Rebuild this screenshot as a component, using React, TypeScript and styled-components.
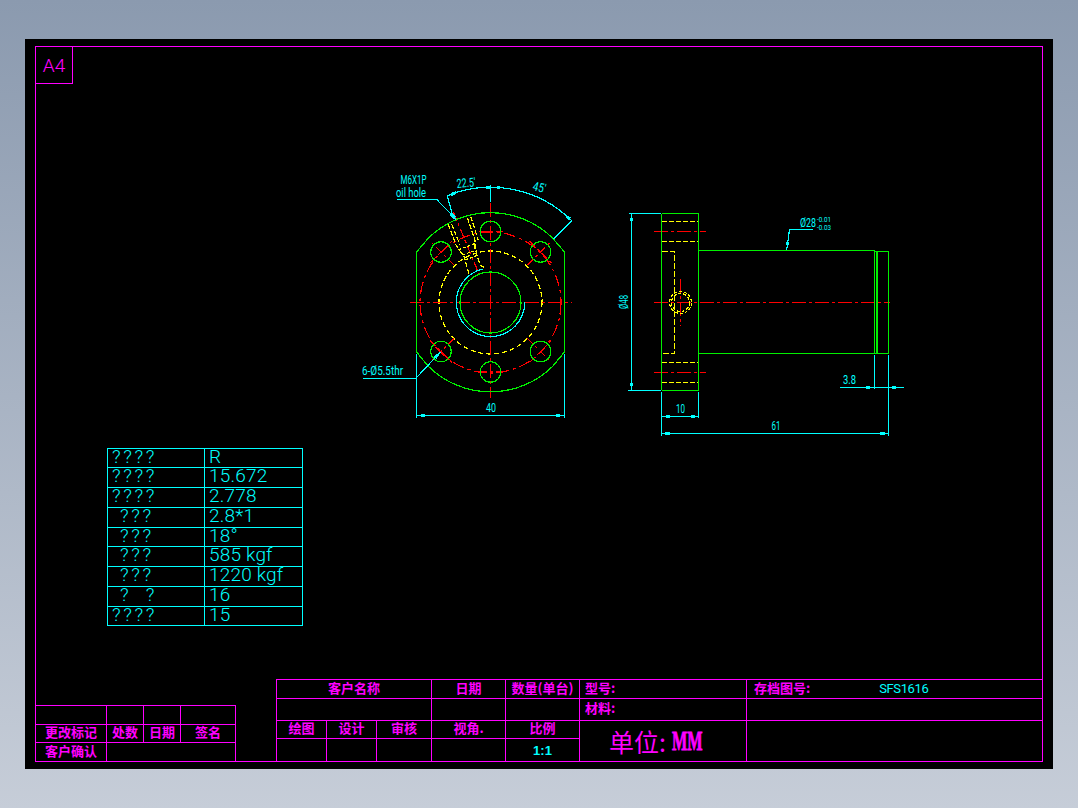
import React from 'react';
import styled, { createGlobalStyle } from 'styled-components';

const GREEN = '#00f000';
const CYAN = '#00ffff';
const RED = '#ff0000';
const YELLOW = '#ffff00';
const MAGENTA = '#ff00ff';
const CX = 490.5;
const CY = 302.5;

const GlobalStyle = createGlobalStyle`
    html, body {
        margin: 0;
        padding: 0;
    }
    #root {
        height: 808px;
    }
`;

const Viewer = styled.div`
    box-sizing: border-box;
    width: 1078px;
    height: 808px;
    padding: 39px 25px;
    overflow: hidden;
    background: linear-gradient(180deg, #8b9aaf 0%, #c6cdd8 100%);
`;

const Sheet = styled.div`
    box-sizing: border-box;
    height: 730px;
    padding: 7px 10px;
    background: #000;
`;

const Frame = styled.div`
    box-sizing: border-box;
    height: 716px;
    display: flex;
    flex-direction: column;
    border: 1px solid ${MAGENTA};
    font-family: 'Noto Sans CJK SC', 'Liberation Sans', sans-serif;
`;

const SizeTag = styled.div`
    box-sizing: border-box;
    width: 37px;
    height: 37px;
    padding-top: 1px;
    display: flex;
    align-items: center;
    justify-content: center;
    border-right: 1px solid ${MAGENTA};
    border-bottom: 1px solid ${MAGENTA};
    color: ${MAGENTA};
    font: 300 19px Roboto, sans-serif;
`;

const Drawing = styled.svg`
    display: block;
    flex: none;
    width: 580px;
    height: 285px;
    margin: 76px 0 0 304px;
    shape-rendering: crispEdges;
`;

const Line = styled.path<{ $color: string; $dash?: string; $width?: number }>`
    fill: none;
    stroke: ${(p) => p.$color};
    stroke-width: ${(p) => p.$width ?? 1.2};
    stroke-dasharray: ${(p) => p.$dash ?? 'none'};
`;

const Round = styled.circle<{ $color: string; $dash?: string }>`
    fill: none;
    stroke: ${(p) => p.$color};
    stroke-width: 1.2;
    stroke-dasharray: ${(p) => p.$dash ?? 'none'};
`;

const DimText = styled.text`
    fill: ${CYAN};
    font-family: Roboto, sans-serif;
    font-weight: 400;
    font-size: 12.5px;
`;

const ToleranceText = styled(DimText)`
    font-size: 7px;
`;

const ParamTable = styled.div`
    flex: none;
    width: 196px;
    margin: 3px 0 0 71px;
    padding: 1px;
    box-sizing: border-box;
    display: grid;
    grid-template-columns: 96px 97px;
    grid-template-rows: 18px 19px 19px 19px 18px 19px 19px 19px 18px;
    gap: 1px;
    background: ${CYAN};
`;

const ParamName = styled.div<{ $indent: number }>`
    background: #000;
    color: ${CYAN};
    padding-left: ${(p) => p.$indent}px;
    font: 300 19px/15px Roboto, sans-serif;
    letter-spacing: 2.6px;
    white-space: pre;
`;

const ParamValue = styled.div`
    background: #000;
    color: ${CYAN};
    padding-left: 4px;
    font: 300 19px/15px Roboto, sans-serif;
    letter-spacing: 0.2px;
    white-space: pre;
`;

const BottomRow = styled.div`
    margin-top: auto;
    display: flex;
    align-items: flex-end;
    justify-content: space-between;
`;

const RevisionTable = styled.div`
    display: grid;
    grid-template-columns: 70px 36px 36px 54px;
    grid-template-rows: 18px 17px 18px;
    gap: 1px;
    padding: 1px 1px 0 0;
    background: ${MAGENTA};
`;

const TitleBlock = styled.div`
    display: grid;
    grid-template-columns: 49px 49px 54px 73px 73px 166px 295px;
    grid-template-rows: 18px 21px 17px 22px;
    gap: 1px;
    padding: 1px 0 0 1px;
    background: ${MAGENTA};
`;

const Cell = styled.div<{ $col?: number; $row?: number; $left?: number }>`
    box-sizing: border-box;
    grid-column: span ${(p) => p.$col ?? 1};
    grid-row: span ${(p) => p.$row ?? 1};
    display: flex;
    align-items: center;
    justify-content: ${(p) => (p.$left !== undefined ? 'flex-start' : 'center')};
    padding-left: ${(p) => p.$left ?? 0}px;
    padding-bottom: 4px;
    background: #000;
    color: ${MAGENTA};
    font-size: 13px;
    font-weight: 700;
    line-height: 1;
    white-space: pre;
`;

const CodeValue = styled.span`
    margin: 3px 0 0 69px;
    color: ${CYAN};
    font: 400 13px Roboto, sans-serif;
    letter-spacing: -0.4px;
`;

const ScaleValue = styled.span`
    margin-top: 4px;
    color: ${CYAN};
    font: bold 13px 'Liberation Sans', sans-serif;
`;

const UnitLabel = styled.span`
    margin-top: 4px;
    font-size: 25px;
    font-weight: 400;
`;

const UnitValue = styled.span`
    display: inline-block;
    width: 28px;
    margin: 4px 0 0 6px;
    font: bold 27px 'Liberation Serif', serif;
    -webkit-text-stroke: 0.8px ${MAGENTA};
    transform: scaleX(0.6);
    transform-origin: left center;
`;

const params = [
    { name: '????', indent: 4, value: 'R' },
    { name: '????', indent: 4, value: '15.672' },
    { name: '????', indent: 4, value: '2.778' },
    { name: '???', indent: 12, value: '2.8*1' },
    { name: '???', indent: 12, value: '18°' },
    { name: '???', indent: 12, value: '585 kgf' },
    { name: '???', indent: 12, value: '1220 kgf' },
    { name: '?  ?', indent: 12, value: '16' },
    { name: '????', indent: 4, value: '15' },
];

const holes = [
    { x: 490.5, y: 231.5, diag: false },
    { x: 441, y: 252, diag: true },
    { x: 540.5, y: 252, diag: true },
    { x: 441, y: 351.5, diag: true },
    { x: 540.5, y: 351.5, diag: true },
    { x: 490.5, y: 372, diag: false },
];

const crossPath = (x: number, y: number, diag: boolean) => {
    if (!diag) return `M${x - 12} ${y}H${x + 12}`;
    const sx = x < CX ? -1 : 1;
    const sy = y < CY ? -1 : 1;
    return `M${x - 13 * sx} ${y - 13 * sy}L${x + 11 * sx} ${y + 11 * sy}M${x - 11} ${y + 11 * sx * sy}L${x + 11} ${y - 11 * sx * sy}`;
};

const RED_DASH = '14 3 3 3';
const YELLOW_DASH = '5 3';

const FrontView = () => (
    <g>
        <Round cx={CX} cy={CY} r={70.5} $color={RED} $dash="12 4 3 4" />
        <Round cx={CX} cy={CY} r={51.5} $color={YELLOW} $dash={YELLOW_DASH} />
        <Line $color={RED} $dash={RED_DASH} d="M410 302.5H572M490.5 203V398" />
        <Line $color={RED} $dash="9 3 3 3" d="M453.4 212.4L479 274" />
        {holes.map((h) => (
            <g key={`${h.x}-${h.y}`}>
                <Line $color={RED} $dash="8 3 3 3" d={crossPath(h.x, h.y, h.diag)} />
                <Round cx={h.x} cy={h.y} r={10.3} $color={GREEN} />
            </g>
        ))}
        <Line
            $color={YELLOW}
            $dash="5 2"
            d="M448.3 224.3L456 245L464 256.7L469.3 275M451.7 224.3L460 245M467.3 217.7L475 240V248.3L480 265L485 268M470.7 216.7L478.3 240"
        />
        <Line $color={YELLOW} $dash="3 2" d="M458 250L476 243M462 255L477 250M465 260L478 255" />
        <Line
            $color={GREEN}
            d="M428.5 238A88.5 88.5 0 0 1 552.5 238L564.5 252V352L552.5 366.5A88.5 88.5 0 0 1 428.5 366.5L416.5 352V252Z"
        />
        <Round cx={CX} cy={CY} r={30.5} $color={GREEN} />
        <Line $color={CYAN} d="M524.7 302.5A34.2 34.2 0 1 1 483 269" />
    </g>
);

const FrontDims = () => (
    <g>
        <Line $color={CYAN} d="M447.3 195.7A115 115 0 0 1 571.7 220.7" />
        <Line $color={CYAN} d="M490.5 185V202M447.3 195.7L453.3 218.3M571.7 220.7L553.3 239" />
        <Line $color={CYAN} $width={3} d="M451 194.5L456 192.7M486 187.7H491M497 187.7H500M567 216.5L570 219" />
        <Line $color={CYAN} d="M396.7 199.5H436.7L456 219.3" />
        <Line $color={CYAN} $width={3} d="M451.5 214.5L455 218" />
        <DimText x={400.5} y={183.5} textLength={26} lengthAdjust="spacingAndGlyphs">M6X1P</DimText>
        <DimText x={396} y={196.5} textLength={30} lengthAdjust="spacingAndGlyphs">oil hole</DimText>
        <DimText x={457} y={188} textLength={19} lengthAdjust="spacingAndGlyphs" transform="rotate(-5 457 188)">22.5'</DimText>
        <DimText x={532} y={190} textLength={13} lengthAdjust="spacingAndGlyphs" transform="rotate(14 532 190)">45'</DimText>
        <Line $color={CYAN} d="M363 378.5H415.7L440.7 351.7" />
        <Line $color={CYAN} $width={3} d="M435 358L438 354.7" />
        <DimText x={362} y={375} textLength={41} lengthAdjust="spacingAndGlyphs">6-Ø5.5thr</DimText>
        <Line $color={CYAN} d="M416.5 354V418M564.5 354V418M416.5 415.5H564.5" />
        <Line $color={CYAN} $width={3} d="M421 415.5H425M556 415.5H560" />
        <DimText x={486} y={412} textLength={10} lengthAdjust="spacingAndGlyphs">40</DimText>
    </g>
);

const SideView = () => (
    <g>
        <Line $color={RED} $dash={RED_DASH} d="M654 231.5H706M654 372.5H706M654 302.5H890M680.5 279V326" />
        <Line $color={YELLOW} $dash="5 2" d="M661.5 221.5H698M661.5 241.5H698M661.5 362.5H698M661.5 382.5H698" />
        <Line $color={YELLOW} $dash="6 2" d="M662 251.5H674.5V353.5H662" />
        <Round cx={680.5} cy={302.5} r={11} $color={YELLOW} $dash="3 2" />
        <Round cx={680.5} cy={302.5} r={9} $color={YELLOW} $dash="3 2" />
        <Line $color={GREEN} d="M662.5 213.5H698.5V390.5H662.5L661.5 389.5V214.5ZM698.5 250.5H874.5V353.5H698.5M874.5 250.5V353.5M874.5 251.5H888.5V353.5H874.5" />
        <Line $color={GREEN} $width={2} d="M877 251.5V353.5" />
    </g>
);

const SideDims = () => (
    <g>
        <Line $color={CYAN} d="M629 213.5H660.5M628 390.5H660.5M631.5 213.5V390.5" />
        <Line $color={CYAN} $width={3} d="M631.5 218V221M631.5 383V386" />
        <DimText x={627.5} y={309} textLength={14} lengthAdjust="spacingAndGlyphs" transform="rotate(-90 627.5 309)">Ø48</DimText>
        <Line $color={CYAN} d="M813.3 229.5H789.5L786.7 250" />
        <Line $color={CYAN} $width={3} d="M787.5 242L787 245" />
        <DimText x={800} y={227} textLength={16} lengthAdjust="spacingAndGlyphs">Ø28</DimText>
        <ToleranceText x={817} y={222} textLength={14} lengthAdjust="spacingAndGlyphs">-0.01</ToleranceText>
        <ToleranceText x={817} y={230} textLength={14} lengthAdjust="spacingAndGlyphs">-0.03</ToleranceText>
        <Line $color={CYAN} d="M661.5 392V436M698.5 392V418M661.5 416.5H698.5" />
        <Line $color={CYAN} $width={3} d="M666 416.5H670M691 416.5H695" />
        <DimText x={676} y={412.7} textLength={9} lengthAdjust="spacingAndGlyphs">10</DimText>
        <Line $color={CYAN} d="M888.5 355V436M661.5 433.5H888.5" />
        <Line $color={CYAN} $width={3} d="M665 433.5H670M880 433.5H885" />
        <DimText x={771.5} y={430} textLength={9} lengthAdjust="spacingAndGlyphs">61</DimText>
        <Line $color={CYAN} d="M874.5 355V389M840 387.5H904" />
        <Line $color={CYAN} $width={3} d="M866 387.5H870M892 387.5H896" />
        <DimText x={843} y={384} textLength={13} lengthAdjust="spacingAndGlyphs">3.8</DimText>
    </g>
);

export default function App() {
    return (
        <Viewer>
            <GlobalStyle />
            <Sheet>
                <Frame>
                    <SizeTag>A4</SizeTag>
                    <Drawing viewBox="340 160 580 285">
                        <FrontView />
                        <FrontDims />
                        <SideView />
                        <SideDims />
                    </Drawing>
                    <ParamTable>
                        {params.map((row, i) => (
                            <React.Fragment key={i}>
                                <ParamName $indent={row.indent}>{row.name}</ParamName>
                                <ParamValue>{row.value}</ParamValue>
                            </React.Fragment>
                        ))}
                    </ParamTable>
                    <BottomRow>
                        <RevisionTable>
                            <Cell />
                            <Cell />
                            <Cell />
                            <Cell />
                            <Cell>更改标记</Cell>
                            <Cell>处数</Cell>
                            <Cell>日期</Cell>
                            <Cell>签名</Cell>
                            <Cell>客户确认</Cell>
                            <Cell $col={3} />
                        </RevisionTable>
                        <TitleBlock>
                            <Cell $col={3}>客户名称</Cell>
                            <Cell>日期</Cell>
                            <Cell>数量(单台)</Cell>
                            <Cell $left={5}>型号:</Cell>
                            <Cell $left={7}>
                                存档图号:
                                <CodeValue>SFS1616</CodeValue>
                            </Cell>
                            <Cell $col={3} />
                            <Cell />
                            <Cell />
                            <Cell $left={5}>材料:</Cell>
                            <Cell />
                            <Cell>绘图</Cell>
                            <Cell>设计</Cell>
                            <Cell>审核</Cell>
                            <Cell>视角.</Cell>
                            <Cell>比例</Cell>
                            <Cell $row={2} $left={29}>
                                <UnitLabel>单位:</UnitLabel>
                                <UnitValue>MM</UnitValue>
                            </Cell>
                            <Cell $row={2} />
                            <Cell />
                            <Cell />
                            <Cell />
                            <Cell />
                            <Cell>
                                <ScaleValue>1:1</ScaleValue>
                            </Cell>
                        </TitleBlock>
                    </BottomRow>
                </Frame>
            </Sheet>
        </Viewer>
    );
}
